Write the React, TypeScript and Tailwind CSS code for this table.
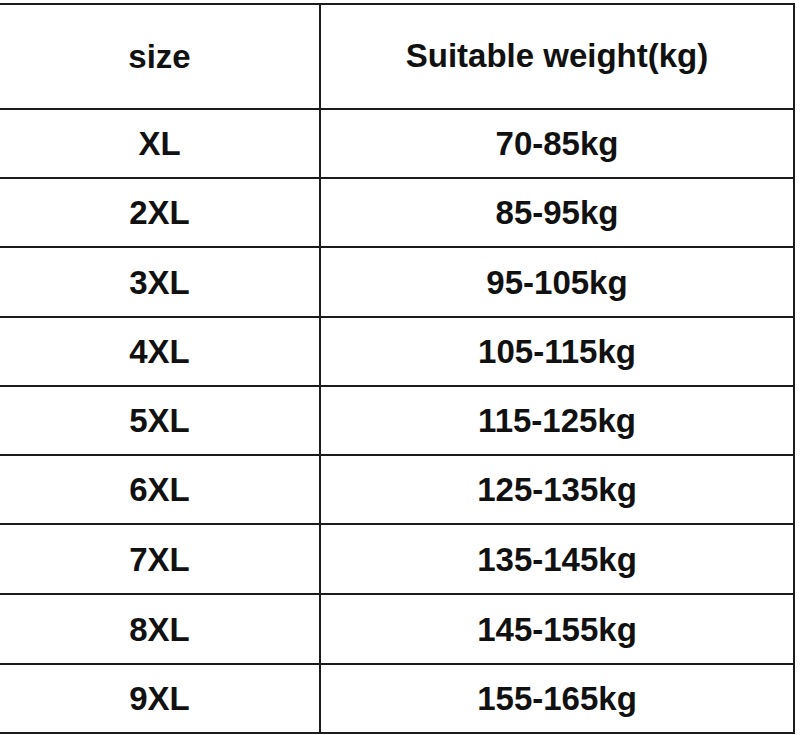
const rows = [
  { size: "XL", weight: "70-85kg", h: "h-[69px]" },
  { size: "2XL", weight: "85-95kg", h: "h-[69px]" },
  { size: "3XL", weight: "95-105kg", h: "h-[70px]" },
  { size: "4XL", weight: "105-115kg", h: "h-[69px]" },
  { size: "5XL", weight: "115-125kg", h: "h-[69px]" },
  { size: "6XL", weight: "125-135kg", h: "h-[69px]" },
  { size: "7XL", weight: "135-145kg", h: "h-[70px]" },
  { size: "8XL", weight: "145-155kg", h: "h-[70px]" },
  { size: "9XL", weight: "155-165kg", h: "h-[69px]" },
];

export default function App() {
  return (
    <div className="w-[800px] h-[735px] bg-white overflow-hidden pt-[3px]">
      <div
        className="w-[795px] border-t-2 border-r-2 border-[#1c1c1c] text-[#111] font-bold text-[33px] leading-none"
        style={{ fontFamily: '"Liberation Sans", Arial, sans-serif' }}
      >
        <div className="flex h-[105px] border-b-2 border-[#1c1c1c]">
          <div className="w-[321px] border-r-2 border-[#1c1c1c] flex items-center justify-center">size</div>
          <div className="flex-1 flex items-center justify-center pb-[2px]">Suitable weight(kg)</div>
        </div>
        {rows.map((r) => (
          <div key={r.size} className={`flex border-b-2 border-[#1c1c1c] ${r.h}`}>
            <div className="w-[321px] border-r-2 border-[#1c1c1c] flex items-center justify-center">{r.size}</div>
            <div className="flex-1 flex items-center justify-center">{r.weight}</div>
          </div>
        ))}
      </div>
    </div>
  );
}
